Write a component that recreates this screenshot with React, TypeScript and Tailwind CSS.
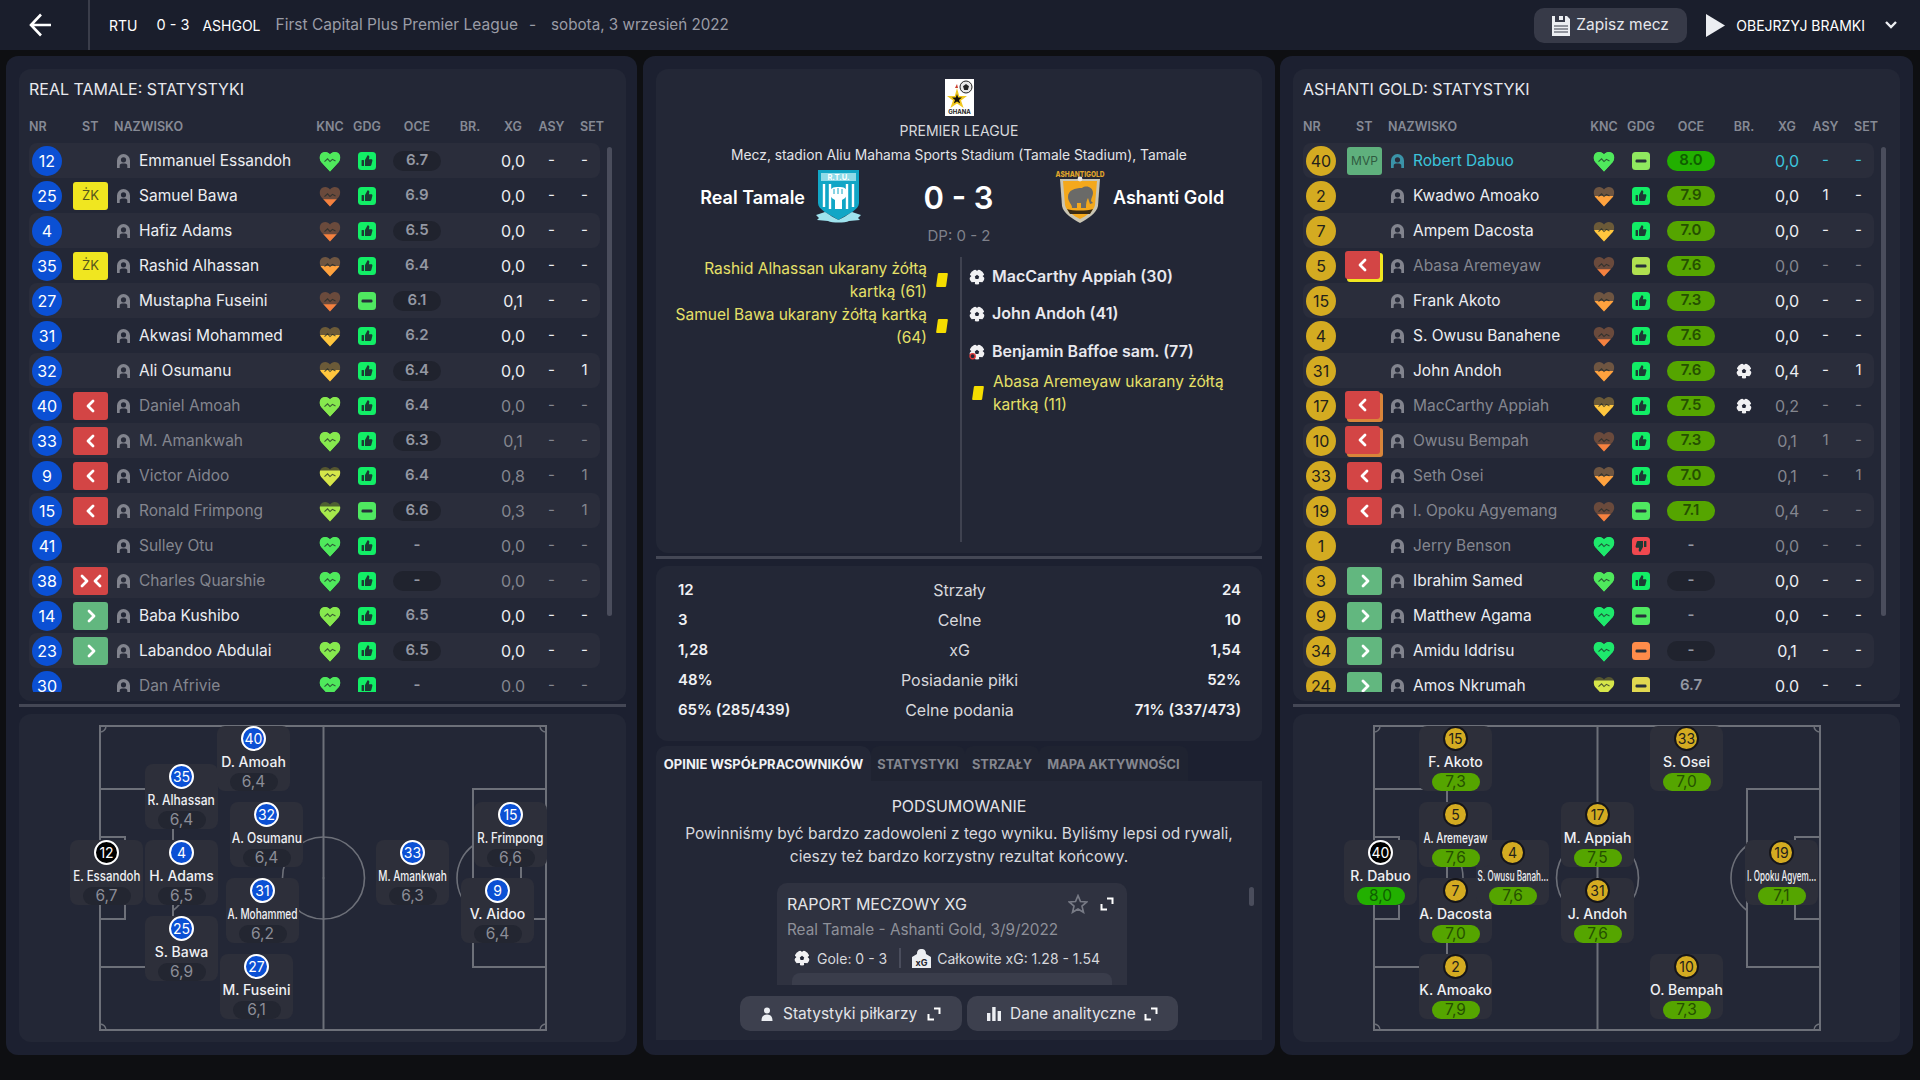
import { useId } from 'react'

type Heart = [string, string, number]
type Row = {
  nr: string
  st?: 'zk' | 'out' | 'outY' | 'outO' | 'in' | 'both' | 'mvp'
  name: string
  heart: Heart
  g?: 'up' | 'down' | 'flat'
  gc: string
  oce: string
  br?: boolean
  xg: string
  asy?: string
  set?: string
  tone?: 'dim' | 'hi'
}

const GREEN: Heart = ['#1ee86c', '#1ee86c', 0]
const MINT: Heart = ['#4fe85c', '#4fe85c', 0]
const LIME: Heart = ['#86e84e', '#86e84e', 0]
const BROWN: Heart = ['#6a4a3c', '#f5813f', 13]
const ORANGE: Heart = ['#6e5541', '#ffa23e', 10]
const AMBER: Heart = ['#6b5a38', '#ffc63e', 9]
const YELLOW: Heart = ['#55562f', '#d6e64a', 5]
const OLIVE: Heart = ['#4d6030', '#a6e84c', 6]

const TH = '#12ee66'

const homeRows: Row[] = [
  { nr: '12', name: 'Emmanuel Essandoh', heart: MINT, gc: TH, oce: '6.7', xg: '0,0' },
  { nr: '25', st: 'zk', name: 'Samuel Bawa', heart: BROWN, gc: TH, oce: '6.9', xg: '0,0' },
  { nr: '4', name: 'Hafiz Adams', heart: BROWN, gc: TH, oce: '6.5', xg: '0,0' },
  { nr: '35', st: 'zk', name: 'Rashid Alhassan', heart: ORANGE, gc: TH, oce: '6.4', xg: '0,0' },
  { nr: '27', name: 'Mustapha Fuseini', heart: BROWN, g: 'flat', gc: '#4fe860', oce: '6.1', xg: '0,1' },
  { nr: '31', name: 'Akwasi Mohammed', heart: AMBER, gc: TH, oce: '6.2', xg: '0,0' },
  { nr: '32', name: 'Ali Osumanu', heart: AMBER, gc: TH, oce: '6.4', xg: '0,0', set: '1' },
  { nr: '40', st: 'out', name: 'Daniel Amoah', heart: LIME, gc: TH, oce: '6.4', xg: '0,0', tone: 'dim' },
  { nr: '33', st: 'out', name: 'M. Amankwah', heart: LIME, gc: TH, oce: '6.3', xg: '0,1', tone: 'dim' },
  { nr: '9', st: 'out', name: 'Victor Aidoo', heart: YELLOW, gc: TH, oce: '6.4', xg: '0,8', set: '1', tone: 'dim' },
  { nr: '15', st: 'out', name: 'Ronald Frimpong', heart: OLIVE, g: 'flat', gc: '#4fe860', oce: '6.6', xg: '0,3', set: '1', tone: 'dim' },
  { nr: '41', name: 'Sulley Otu', heart: MINT, gc: TH, oce: '-', xg: '0,0', tone: 'dim' },
  { nr: '38', st: 'both', name: 'Charles Quarshie', heart: MINT, gc: TH, oce: '-', xg: '0,0', tone: 'dim' },
  { nr: '14', st: 'in', name: 'Baba Kushibo', heart: LIME, gc: TH, oce: '6.5', xg: '0,0' },
  { nr: '23', st: 'in', name: 'Labandoo Abdulai', heart: LIME, gc: TH, oce: '6.5', xg: '0,0' },
  { nr: '30', name: 'Dan Afrivie', heart: MINT, gc: TH, oce: '-', xg: '0,0', tone: 'dim' },
]

const awayRows: Row[] = [
  { nr: '40', st: 'mvp', name: 'Robert Dabuo', heart: MINT, g: 'flat', gc: '#8fe85f', oce: '8.0', xg: '0,0', tone: 'hi' },
  { nr: '2', name: 'Kwadwo Amoako', heart: ORANGE, gc: TH, oce: '7.9', xg: '0,0', asy: '1' },
  { nr: '7', name: 'Ampem Dacosta', heart: AMBER, gc: TH, oce: '7.0', xg: '0,0' },
  { nr: '5', st: 'outY', name: 'Abasa Aremeyaw', heart: BROWN, g: 'flat', gc: '#b0e050', oce: '7.6', xg: '0,0', tone: 'dim' },
  { nr: '15', name: 'Frank Akoto', heart: ORANGE, gc: TH, oce: '7.3', xg: '0,0' },
  { nr: '4', name: 'S. Owusu Banahene', heart: BROWN, gc: TH, oce: '7.6', xg: '0,0' },
  { nr: '31', name: 'John Andoh', heart: ORANGE, gc: TH, oce: '7.6', br: true, xg: '0,4', set: '1' },
  { nr: '17', st: 'outO', name: 'MacCarthy Appiah', heart: AMBER, gc: TH, oce: '7.5', br: true, xg: '0,2', tone: 'dim' },
  { nr: '10', st: 'outO', name: 'Owusu Bempah', heart: BROWN, gc: TH, oce: '7.3', xg: '0,1', asy: '1', tone: 'dim' },
  { nr: '33', st: 'out', name: 'Seth Osei', heart: ORANGE, gc: TH, oce: '7.0', xg: '0,1', set: '1', tone: 'dim' },
  { nr: '19', st: 'out', name: 'I. Opoku Agyemang', heart: BROWN, g: 'flat', gc: '#4fe860', oce: '7.1', xg: '0,4', tone: 'dim' },
  { nr: '1', name: 'Jerry Benson', heart: GREEN, g: 'down', gc: '#f0484f', oce: '-', xg: '0,0', tone: 'dim' },
  { nr: '3', st: 'in', name: 'Ibrahim Samed', heart: MINT, gc: TH, oce: '-', xg: '0,0' },
  { nr: '9', st: 'in', name: 'Matthew Agama', heart: GREEN, g: 'flat', gc: '#4fe860', oce: '-', xg: '0,0' },
  { nr: '34', st: 'in', name: 'Amidu Iddrisu', heart: GREEN, g: 'flat', gc: '#ff8c4a', oce: '-', xg: '0,1' },
  { nr: '24', st: 'in', name: 'Amos Nkrumah', heart: YELLOW, g: 'flat', gc: '#e0d850', oce: '6.7', xg: '0,0' },
]

type Dot = { x: number; y: number; nr: string; name: string; r: string; gk?: boolean; sq?: string }

// miejsca na boisku liczone od lewego gornego rogu karty
const homeDots: Dot[] = [
  { x: 51, y: 126, nr: '12', name: 'E. Essandoh', r: '6,7', gk: true, sq: 'scale-x-[0.82]' },
  { x: 126, y: 50, nr: '35', name: 'R. Alhassan', r: '6,4', sq: 'scale-x-[0.86]' },
  { x: 126, y: 126, nr: '4', name: 'H. Adams', r: '6,5' },
  { x: 126, y: 202, nr: '25', name: 'S. Bawa', r: '6,9' },
  { x: 198, y: 12, nr: '40', name: 'D. Amoah', r: '6,4' },
  { x: 211, y: 88, nr: '32', name: 'A. Osumanu', r: '6,4', sq: 'scale-x-[0.86]' },
  { x: 207, y: 164, nr: '31', name: 'A. Mohammed', r: '6,2', sq: 'scale-x-[0.72]' },
  { x: 201, y: 240, nr: '27', name: 'M. Fuseini', r: '6,1' },
  { x: 357, y: 126, nr: '33', name: 'M. Amankwah', r: '6,3', sq: 'scale-x-[0.72]' },
  { x: 455, y: 88, nr: '15', name: 'R. Frimpong', r: '6,6', sq: 'scale-x-[0.82]' },
  { x: 442, y: 164, nr: '9', name: 'V. Aidoo', r: '6,4' },
]

// kolejnosc ma znaczenie: karty zachodza na siebie
const awayDots: Dot[] = [
  { x: 51, y: 126, nr: '40', name: 'R. Dabuo', r: '8,0', gk: true },
  { x: 126, y: 12, nr: '15', name: 'F. Akoto', r: '7,3' },
  { x: 126, y: 164, nr: '7', name: 'A. Dacosta', r: '7,0' },
  { x: 183, y: 126, nr: '4', name: 'S. Owusu Banah...', r: '7,6', sq: 'scale-x-[0.58]' },
  { x: 126, y: 88, nr: '5', name: 'A. Aremeyaw', r: '7,6', sq: 'scale-x-[0.72]' },
  { x: 126, y: 240, nr: '2', name: 'K. Amoako', r: '7,9' },
  { x: 268, y: 88, nr: '17', name: 'M. Appiah', r: '7,5' },
  { x: 268, y: 164, nr: '31', name: 'J. Andoh', r: '7,6' },
  { x: 357, y: 12, nr: '33', name: 'S. Osei', r: '7,0' },
  { x: 357, y: 240, nr: '10', name: 'O. Bempah', r: '7,3' },
  { x: 452, y: 126, nr: '19', name: 'I. Opoku Agyem...', r: '7,1', sq: 'scale-x-[0.58]' },
]

const stats = [
  ['12', 'Strzały', '24'],
  ['3', 'Celne', '10'],
  ['1,28', 'xG', '1,54'],
  ['48%', 'Posiadanie piłki', '52%'],
  ['65% (285/439)', 'Celne podania', '71% (337/473)'],
]

const COLS = 'grid grid-cols-[41px_47px_22px_175px_32px_42px_58px_48px_38px_39px_27px] items-center'

function HeartIcon({ heart }: { heart: Heart }) {
  const id = useId()
  const [top, bottom, level] = heart
  const d = 'M10 19.5 L2 10.8 C0 8.2 .4 4 3 2.5 C5.5 1 8.5 1.8 10 4 C11.5 1.8 14.5 1 17 2.5 C19.6 4 20 8.2 18 10.8 Z'
  return (
    <svg width="22" height="22" viewBox="0 0 20 20">
      <clipPath id={id}>
        <rect x="0" y={level} width="20" height={20 - level} />
      </clipPath>
      <path d={d} fill={top} />
      <path d={d} fill={bottom} clipPath={`url(#${id})`} />
      <path d="M5 10.5 L7.8 8 L10 10.5 L12.2 8.5 L15 10" fill="none" stroke="#1f2a2a" strokeOpacity="0.75" strokeWidth="1" />
    </svg>
  )
}

function FormIcon({ g, color }: { g?: string; color: string }) {
  return (
    <svg width="18" height="18" viewBox="0 0 18 18">
      <rect width="18" height="18" rx="3.5" fill={color} />
      {g === 'flat' ? (
        <rect x="3.5" y="7.6" width="11" height="2.8" rx="1.2" fill="#27303a" />
      ) : (
        <g transform={g === 'down' ? 'rotate(180 9 9)' : undefined} fill="#1c3a34">
          <rect x="3.6" y="8" width="2.4" height="6" rx=".5" />
          <path d="M7 8 L9.6 3.2 C10.8 3.2 11.5 4 11.3 5.2 L10.9 7.3 H13.2 C14.1 7.3 14.6 8 14.4 8.8 L13.3 13.1 C13.1 13.7 12.7 14 12.1 14 H7 Z" />
        </g>
      )}
    </svg>
  )
}

function PersonIcon({ color }: { color: string }) {
  return (
    <svg width="13" height="14" viewBox="0 0 13 14">
      <path
        fillRule="evenodd"
        fill={color}
        d="M0 14 V6.5 A6.5 6.5 0 0 1 13 6.5 V14 H10.3 V11.6 C10.3 10.2 9 9.6 6.5 9.6 C4 9.6 2.7 10.2 2.7 11.6 V14 Z M6.5 3.2 A2.6 2.6 0 1 0 6.5 8.4 A2.6 2.6 0 1 0 6.5 3.2 Z"
      />
    </svg>
  )
}

function BallIcon({ own }: { own?: boolean }) {
  return (
    <svg width="16" height="16" viewBox="0 0 16 16">
      <circle cx="8" cy="8" r="7.6" fill="#f1f1f3" />
      <path d="M8 5.8 L10.2 7.4 L9.4 10 H6.6 L5.8 7.4 Z" fill="#232736" />
      <path d="M5.8 -.2 L10.2 -.2 L8 2 Z M-.2 5 L-.2 9.6 L2.4 7 Z M16.2 5 L16.2 9.6 L13.6 7 Z M2 13.2 L5.8 16.2 L6 13 Z M14 13.2 L10.2 16.2 L10 13 Z" fill="#232736" />
      {own && <circle cx="3.6" cy="12.2" r="2.6" fill="#232736" stroke="#e23b3b" strokeWidth="1.4" />}
    </svg>
  )
}

function Chevron({ right, size = 14 }: { right?: boolean; size?: number }) {
  return (
    <svg width={size} height={size} viewBox="0 0 14 14" fill="none" stroke="#fff" strokeWidth="2.8" strokeLinecap="round" strokeLinejoin="round">
      <path d={right ? 'M5 2 L10 7 L5 12' : 'M9 2 L4 7 L9 12'} />
    </svg>
  )
}

function ExpandIcon() {
  return (
    <svg width="14" height="14" viewBox="0 0 14 14" fill="none" stroke="#fff" strokeWidth="2">
      <path d="M7 1.5 H12.5 V7 M1.5 7 V12.5 H7" />
    </svg>
  )
}

function CardIcon() {
  return <span className="block h-[14px] w-[10px] -skew-x-[8deg] rounded-[1px] bg-[#f5dd00]" />
}

function StBadge({ st }: { st: Row['st'] }) {
  if (!st) return <div />
  if (st === 'zk') {
    return <div className="ml-[3px] flex h-[28px] w-[35px] items-center justify-center rounded-[3px] bg-[#f0e620] text-[13px] text-[#55551c]">ŻK</div>
  }
  if (st === 'mvp') {
    return <div className="ml-[3px] flex h-[28px] w-[35px] items-center justify-center rounded-[3px] bg-[#5fb07d] text-[12px] text-[#2f5a40]">MVP</div>
  }
  if (st === 'in') {
    return (
      <div className="ml-[3px] flex h-[28px] w-[35px] items-center justify-center rounded-[3px] bg-[#62b77f]">
        <Chevron right />
      </div>
    )
  }
  if (st === 'both') {
    return (
      <div className="ml-[3px] flex h-[28px] w-[35px] items-center justify-center rounded-[3px] bg-[#d34545]">
        <Chevron right />
        <Chevron />
      </div>
    )
  }
  return (
    <div className="relative ml-[3px] h-[28px] w-[35px]">
      {st === 'outY' && <div className="absolute left-0 top-[1px] h-[29px] w-[36px] rounded-[3px] bg-[#f0e620]" />}
      {st === 'outO' && <div className="absolute left-0 top-[1px] h-[29px] w-[36px] rounded-[3px] bg-[#d9853a]" />}
      <div className={`absolute flex h-[28px] w-[35px] items-center justify-center rounded-[3px] bg-[#d34545] ${st === 'out' ? 'left-0 top-0' : '-left-[2px] -top-[1px]'}`}>
        <Chevron />
      </div>
    </div>
  )
}

function RatingPill({ row, alt, away }: { row: Row; alt: boolean; away: boolean }) {
  const rated = away && row.oce !== '-' && row.nr !== '24'
  const bg = rated ? (row.oce === '8.0' ? 'bg-[#22b000]' : 'bg-[#55a500]') : alt ? 'bg-[#20232e]' : 'bg-transparent'
  const text = rated ? (row.oce === '8.0' ? 'text-[#0f5e00]' : 'text-[#255000]') : 'text-[#9498a3]'
  return <div className={`mx-auto flex h-[20px] w-[48px] items-center justify-center rounded-full text-[15px] font-semibold ${bg} ${text}`}>{row.oce}</div>
}

function PlayerRow({ row, alt, away }: { row: Row; alt: boolean; away: boolean }) {
  const tone = row.tone === 'dim' ? 'text-[#84868f]' : row.tone === 'hi' ? 'text-[#3cc4dc]' : 'text-[#eceef2]'
  return (
    <div className={`${COLS} h-[35px] w-[571px] rounded-[8px] ${alt ? 'bg-[#2a2d3b]' : ''}`}>
      <div className={`ml-[3px] flex h-[30px] w-[30px] items-center justify-center rounded-full text-[16px] ${away ? 'bg-[#d4ab21] text-[#23211a]' : 'bg-[#0b50d4] text-white'}`}>{row.nr}</div>
      <StBadge st={row.st} />
      <PersonIcon color={row.tone === 'hi' ? '#3b93a8' : '#82848e'} />
      <div className={`truncate text-[15.5px] ${tone}`}>{row.name}</div>
      <div className="flex justify-center"><HeartIcon heart={row.heart} /></div>
      <div className="flex justify-center"><FormIcon g={row.g} color={row.gc} /></div>
      <RatingPill row={row} alt={alt} away={away} />
      <div className="flex justify-center">{row.br && <BallIcon />}</div>
      <div className={`text-center text-[16px] ${tone}`}>{row.xg}</div>
      <div className={`text-center text-[15px] ${tone}`}>{row.asy ?? '-'}</div>
      <div className={`text-center text-[15px] ${tone}`}>{row.set ?? '-'}</div>
    </div>
  )
}

function Pitch() {
  return (
    <svg width="448" height="306" viewBox="-1 -1 448 306" fill="none" stroke="#6d7079" strokeWidth="2" className="ml-[80px]">
      <rect x="0" y="0" width="446" height="304" />
      <line x1="223.5" y1="0" x2="223.5" y2="304" />
      <circle cx="223.5" cy="152" r="41" strokeWidth="1.6" />
      <circle cx="223.5" cy="152" r="1" fill="#6d7079" strokeWidth="0" />
      <path d="M0 63 H73 V241 H0 M0 111 H25 V193 H0" />
      <path d="M446 63 H373 V241 H446 M446 111 H421 V193 H446" />
      <path d="M73 119.5 A41 41 0 0 1 73 184.5" strokeWidth="1.6" />
      <path d="M373 119.5 A41 41 0 0 0 373 184.5" strokeWidth="1.6" />
      <path d="M6 0 A6 6 0 0 1 0 6 M440 0 A6 6 0 0 0 446 6 M0 298 A6 6 0 0 1 6 304 M446 298 A6 6 0 0 0 440 304" strokeWidth="1.5" />
    </svg>
  )
}

function PitchCard({ dot, away }: { dot: Dot; away: boolean }) {
  const ring = dot.gk
    ? 'border-white bg-black text-white'
    : away
      ? 'border-[#15151a] bg-[#d4ab21] text-[#23211a]'
      : 'border-white bg-[#0b50d4] text-white'
  const eight = dot.r === '8,0'
  const pill = away ? (eight ? 'bg-[#22b000] text-[#0f5e00]' : 'bg-[#55a500] text-[#255000]') : 'bg-[#232631] text-[#8b8d97]'
  return (
    <div className="absolute flex h-[65px] w-[73px] flex-col items-center rounded-[8px] bg-[#2d2f3a]" style={{ left: dot.x, top: dot.y }}>
      <div className={`flex h-[25px] w-[25px] items-center justify-center rounded-full border-2 text-[14px] ${ring}`}>{dot.nr}</div>
      <div className={`flex h-[21px] items-center whitespace-nowrap text-[14px] font-medium text-[#f0f1f4] ${dot.sq ?? ''}`}>{dot.name}</div>
      <div className={`mt-auto flex h-[18px] w-[48px] items-center justify-center rounded-[9px] text-[15.5px] ${pill}`}>{dot.r}</div>
    </div>
  )
}

function TeamPanel({ title, rows, dots, away, width }: { title: string; rows: Row[]; dots: Dot[]; away: boolean; width: string }) {
  return (
    <section className={`h-[999px] rounded-[12px] bg-[#1c2030] px-[13px] pt-[13px] ${width}`}>
      <div className="relative h-[632px] w-[607px] rounded-[12px] bg-[#232736] pl-[10px]">
        <h2 className="pt-[10px] text-[16px] leading-[20px] text-[#e8e9ee]">{title}</h2>
        <div className={`${COLS} mt-[18px] h-[20px] w-[571px] text-[12.5px] font-semibold text-[#868a95]`}>
          <div>NR</div>
          <div className="pl-[12px]">ST</div>
          <div className="col-span-2 -ml-[3px]">NAZWISKO</div>
          <div className="text-center">KNC</div>
          <div className="text-center">GDG</div>
          <div className="text-center">OCE</div>
          <div className="text-center">BR.</div>
          <div className="text-center">XG</div>
          <div className="text-center">ASY</div>
          <div className="whitespace-nowrap pl-[9px]">SET</div>
        </div>
        <div className="mt-[6px] h-[549px] overflow-hidden">
          {rows.map((row, i) => (
            <PlayerRow key={row.nr + row.name} row={row} alt={i % 2 === 0} away={away} />
          ))}
        </div>
        <div className="absolute left-[588px] top-[78px] h-[469px] w-[5px] rounded-full bg-[#4a4d5c]" />
      </div>
      <div className="mt-[3px] h-[3px] w-[607px] bg-[#444755]" />
      <div className="relative mt-[7px] h-[328px] w-[607px] rounded-[12px] bg-[#232736] pt-[11px]">
        <Pitch />
        {dots.map((dot) => (
          <PitchCard key={dot.nr} dot={dot} away={away} />
        ))}
      </div>
    </section>
  )
}

function LeagueLogo() {
  return (
    <svg width="29" height="37" viewBox="0 0 29 37">
      <rect width="29" height="37" fill="#fff" />
      <circle cx="21" cy="8" r="6" fill="#e8e8e8" stroke="#222" />
      <path d="M21 5 L24 7.2 L22.8 11 H19.2 L18 7.2 Z" fill="#222" />
      <path d="M12 9 L14.2 17 L22 17 L16 21.6 L18.6 29 L12 24.5 L5.4 29 L8 21.6 L2 17 L9.8 17 Z" fill="#f2c81e" />
      <path d="M12 15 L13.2 18.6 L17 18.6 L14 21 L15.2 24.6 L12 22.4 L8.8 24.6 L10 21 L7 18.6 L10.8 18.6 Z" fill="#16120c" />
      <path d="M10 9 L12 5 L13 9 Z" fill="#c93a2b" />
      <text x="14.5" y="34.5" textAnchor="middle" fontSize="6" fontWeight="700" fill="#222">GHANA</text>
    </svg>
  )
}

function HomeCrest() {
  return (
    <svg width="47" height="56" viewBox="0 0 47 56">
      <path d="M3 1 H44 V34 C44 41 33 45 23.5 51 C14 45 3 41 3 34 Z" fill="#11a6c6" />
      <rect x="6" y="4" width="35" height="8" fill="#8fdbe8" />
      <text x="23.5" y="11" textAnchor="middle" fontSize="7.5" fontWeight="700" fill="#fff">R.T.U.</text>
      <path d="M9 15 V38 M15 15 V40 M32 15 V40 M38 15 V38" stroke="#fff" strokeWidth="2.4" />
      <path d="M15 24 C15 19 18 18 23.5 18 C29 18 32 19 32 24 C32 28 29 30 27 31 V40 H20 V31 C18 30 15 28 15 24 Z" fill="#fff" />
      <path d="M19 20 V25 M23 19 V25 M27 20 V25" stroke="#11a6c6" strokeWidth="1" />
      <path d="M1 46 L10 43 C15 46 19 49 23.5 51 C28 49 32 46 37 43 L46 46 L43 49 L45 51 L34 52 C30 54 17 54 13 52 L2 51 L4 49 Z" fill="#9fe3ee" />
    </svg>
  )
}

function AwayCrest() {
  return (
    <svg width="50" height="54" viewBox="0 0 50 54">
      <text x="25" y="7" textAnchor="middle" fontSize="8" fontWeight="800" fill="#e0a52a" textLength="49" lengthAdjust="spacingAndGlyphs">ASHANTIGOLD</text>
      <path d="M5 9 H45 L43 36 C42 43 32 49 25 53 C18 49 8 43 7 36 Z" fill="#c9c5b4" />
      <path d="M8 11 H42 L40 35 C39 41 31 46 25 49 C19 46 11 41 10 35 Z" fill="#f4a81c" />
      <path d="M13 27 C13 20 20 18 27 18 C31 15 38 17 38 23 C38 26 36 28 36 31 L38 33 L35 34 L33 28 C32 30 31 32 31 38 H26 L26 33 H22 L22 38 H17 C17 34 13 32 13 27 Z" fill="#6a6a68" />
      <circle cx="25" cy="9" r="2.4" fill="#e8e8e8" />
      <path d="M12 39 C18 41 32 41 38 39 L35 44 H15 Z" fill="#3a2a12" />
    </svg>
  )
}

export default function App() {
  return (
    <div className="h-[1080px] w-[1920px] overflow-hidden bg-[#0e0f12] font-['Inter',sans-serif] text-white">
      <header className="flex h-[50px] items-center bg-[#1a1e2c]">
        <div className="flex h-full w-[90px] items-center border-r-2 border-[#3a3d4a] pl-[29px]">
          <svg width="22" height="24" viewBox="0 0 22 24" fill="none" stroke="#fff" strokeWidth="2.6">
            <path d="M12 1.5 L2 12 L12 22.5 M2 12 H22" />
          </svg>
        </div>
        <span className="ml-[19px] text-[14px]">RTU</span>
        <span className="ml-[19px] text-[14.5px]">0 - 3</span>
        <span className="ml-[13px] text-[14px]">ASHGOL</span>
        <span className="ml-[15px] text-[15.5px] text-[#9a9ca6]">First Capital Plus Premier League</span>
        <span className="ml-[11px] text-[15.5px] text-[#9a9ca6]">-</span>
        <span className="ml-[15px] text-[15.2px] text-[#9a9ca6]">sobota, 3 wrzesień 2022</span>
        <div className="ml-auto flex h-[35px] w-[153px] items-center rounded-[10px] bg-[#373a48] pl-[17px]">
          <svg width="20" height="24" viewBox="0 0 20 24" fill="#eceef2">
            <path d="M1 3 H4 V9 H14 V3 H16 L19 6 V23 H1 Z M8 3 H12 V7 H8 Z" />
            <path d="M3 13 H17 M3 16 H17 M3 19 H17" stroke="#373a48" strokeWidth="1.2" />
          </svg>
          <span className="ml-[5px] text-[15.5px] text-[#e6e7ec]">Zapisz mecz</span>
        </div>
        <svg width="19" height="23" viewBox="0 0 19 23" className="ml-[19px]">
          <path d="M0 0 L19 11.5 L0 23 Z" fill="#eceef2" />
        </svg>
        <span className="ml-[11px] text-[14px]">OBEJRZYJ BRAMKI</span>
        <svg width="12" height="8" viewBox="0 0 12 8" fill="none" stroke="#eceef2" strokeWidth="2.4" className="ml-[20px] mr-[23px]">
          <path d="M1 1 L6 6 L11 1" />
        </svg>
      </header>

      <main className="flex pl-[6px] pt-[6px]">
        <TeamPanel title="REAL TAMALE: STATYSTYKI" rows={homeRows} dots={homeDots} away={false} width="w-[631px]" />

        <section className="ml-[6px] h-[999px] w-[632px] rounded-[12px] bg-[#1c2030] px-[13px] pt-[13px]">
          {/* Match header + events */}
          <div className="flex h-[484px] flex-col items-center rounded-[12px] bg-[#232736] pt-[10px]">
            <LeagueLogo />
            <div className="mt-[5px] text-[14px] leading-[20px] text-[#d7d8dc]">PREMIER LEAGUE</div>
            <div className="mt-[4px] text-[13.8px] leading-[20px] text-[#e3e4e8]">Mecz, stadion Aliu Mahama Sports Stadium (Tamale Stadium), Tamale</div>
            <div className="mt-[4px] grid h-[56px] w-full grid-cols-[206px_193px_207px] items-center">
              <div className="flex items-center justify-end gap-[10px]">
                <span className="text-[18px] font-semibold">Real Tamale</span>
                <HomeCrest />
              </div>
              <div className="text-center text-[31px] font-semibold leading-none">0 - 3</div>
              <div className="flex items-center gap-[8px]">
                <AwayCrest />
                <span className="text-[18px] font-semibold">Ashanti Gold</span>
              </div>
            </div>
            <div className="mt-[1px] text-[15px] leading-[20px] text-[#7f818b]">DP: 0 - 2</div>
            <div className="mt-[11px] flex h-[285px] w-full text-[15.5px] leading-[23px]">
              <div className="w-[304px] text-right text-[#e6e068]">
                <div className="flex items-center justify-end">
                  <div className="w-[260px]">Rashid Alhassan ukarany żółtą kartką (61)</div>
                  <div className="ml-[10px] mr-[13px]"><CardIcon /></div>
                </div>
                <div className="flex items-center justify-end">
                  <div className="w-[260px]">Samuel Bawa ukarany żółtą kartką (64)</div>
                  <div className="ml-[10px] mr-[13px]"><CardIcon /></div>
                </div>
              </div>
              <div className="flex-1 border-l-2 border-[#3f4250] text-[#e8e8ee]">
                <div className="mt-[8px] flex items-center text-[16px] font-semibold">
                  <div className="ml-[7px] mr-[7px]"><BallIcon /></div>
                  <span>MacCarthy Appiah (30)</span>
                </div>
                <div className="mt-[14px] flex items-center text-[16px] font-semibold">
                  <div className="ml-[7px] mr-[7px]"><BallIcon /></div>
                  <span>John Andoh (41)</span>
                </div>
                <div className="mt-[15px] flex items-center text-[16px] font-semibold">
                  <div className="ml-[7px] mr-[7px]"><BallIcon own /></div>
                  <span>Benjamin Baffoe sam. (77)</span>
                </div>
                <div className="mt-[7px] flex items-center text-[#e6e068]">
                  <div className="ml-[11px] mr-[10px]"><CardIcon /></div>
                  <div className="w-[240px]">Abasa Aremeyaw ukarany żółtą kartką (11)</div>
                </div>
              </div>
            </div>
          </div>

          <div className="mt-[3px] h-[3px] bg-[#444755]" />

          {/* Team stats */}
          <div className="mt-[7px] h-[175px] rounded-[12px] bg-[#232736] pl-[22px] pr-[21px] pt-[9px]">
            {stats.map(([a, label, b]) => (
              <div key={label} className="grid h-[30px] grid-cols-3 items-center text-[15px]">
                <span className="font-semibold text-[#f0f1f4]">{a}</span>
                <span className="text-center text-[16px] text-[#d7d8dc]">{label}</span>
                <span className="text-right font-semibold text-[#f0f1f4]">{b}</span>
              </div>
            ))}
          </div>

          {/* Tabs */}
          <div className="mt-[5px] flex h-[35px] items-center text-[12.8px] font-bold text-[#85878f]">
            <div className="flex h-full w-[215px] items-center justify-center rounded-t-[10px] bg-[#232736] pt-[2px] text-[13px] text-[#f0f1f4]">OPINIE WSPÓŁPRACOWNIKÓW</div>
            <div className="flex h-full w-[94px] items-center justify-center rounded-t-[8px] bg-[#1f2331] pt-[2px]">STATYSTYKI</div>
            <div className="flex h-full w-[74px] items-center justify-center rounded-t-[8px] bg-[#1f2331] pt-[2px]">STRZAŁY</div>
            <div className="flex h-full w-[149px] items-center justify-center rounded-t-[8px] bg-[#1f2331] pt-[2px]">MAPA AKTYWNOŚCI</div>
          </div>
          <div className="relative flex h-[259px] flex-col items-center bg-[#232736] pt-[15px]">
            <div className="text-[16px] leading-[20px] text-[#e3e4e8]">PODSUMOWANIE</div>
            <p className="mt-[6px] w-[560px] text-center text-[15.5px] leading-[23px] text-[#d8d9de]">
              Powinniśmy być bardzo zadowoleni z tego wyniku. Byliśmy lepsi od rywali, cieszy też bardzo korzystny rezultat końcowy.
            </p>
            <div className="mr-[14px] mt-[15px] h-[102px] w-[350px] overflow-hidden rounded-t-[10px] bg-[#2f3240] px-[10px] pt-[11px]">
              <div className="flex h-[20px] items-center">
                <span className="text-[16px] text-[#e3e4e8]">RAPORT MECZOWY XG</span>
                <svg width="20" height="20" viewBox="0 0 24 24" fill="none" stroke="#777a85" strokeWidth="2" className="ml-auto">
                  <path d="M12 2 L15 9 L22.5 9.6 L16.8 14.5 L18.6 22 L12 18 L5.4 22 L7.2 14.5 L1.5 9.6 L9 9 Z" />
                </svg>
                <div className="ml-[12px] mr-[3px]"><ExpandIcon /></div>
              </div>
              <div className="mt-[6px] text-[15.3px] leading-[20px] text-[#8e9099]">Real Tamale - Ashanti Gold, 3/9/2022</div>
              <div className="mt-[8px] flex h-[20px] items-center text-[14px] text-[#d7d8dc]">
                <div className="ml-[7px] mr-[7px]"><BallIcon /></div>
                <span>Gole: 0 - 3</span>
                <span className="ml-[12px] h-[20px] w-[2px] bg-[#4a4d5c]" />
                <svg width="21" height="20" viewBox="0 0 21 20" className="ml-[10px] mr-[5px]">
                  <path d="M6 6 C6 2 8 1 10.5 1 C13 1 15 2 15 6 L20 9 V20 H1 V9 Z" fill="#eceef2" />
                  <text x="10.5" y="18" textAnchor="middle" fontSize="9" fontWeight="700" fill="#23262f">xG</text>
                </svg>
                <span>Całkowite xG: 1.28 - 1.54</span>
              </div>
              <div className="mx-[5px] mt-[5px] h-[20px] rounded-t-[8px] bg-[#3a3d4b]" />
            </div>
            <div className="mt-[11px] flex gap-[5px] text-[15.5px] text-[#e3e4e8]">
              <div className="flex h-[35px] w-[222px] items-center rounded-[10px] bg-[#3d404e] pl-[21px]">
                <svg width="12" height="14" viewBox="0 0 12 14" fill="#eceef2">
                  <circle cx="6" cy="3.5" r="3" />
                  <path d="M0.5 14 C0.5 9 3 7.5 6 7.5 C9 7.5 11.5 9 11.5 14 Z" />
                </svg>
                <span className="ml-[10px]">Statystyki piłkarzy</span>
                <div className="ml-[10px]"><ExpandIcon /></div>
              </div>
              <div className="flex h-[35px] w-[211px] items-center rounded-[10px] bg-[#3d404e] pl-[20px]">
                <svg width="14" height="14" viewBox="0 0 14 14" fill="#eceef2">
                  <rect x="0" y="6" width="3.4" height="8" />
                  <rect x="5.2" y="0" width="3.4" height="14" />
                  <rect x="10.6" y="4" width="3.4" height="10" />
                </svg>
                <span className="ml-[9px]">Dane analityczne</span>
                <div className="ml-[8px]"><ExpandIcon /></div>
              </div>
            </div>
            <div className="absolute left-[593px] top-[106px] h-[19px] w-[5px] rounded-full bg-[#4a4d5c]" />
          </div>
        </section>

        <div className="ml-[5px]">
          <TeamPanel title="ASHANTI GOLD: STATYSTYKI" rows={awayRows} dots={awayDots} away={true} width="w-[633px]" />
        </div>
      </main>
    </div>
  )
}
